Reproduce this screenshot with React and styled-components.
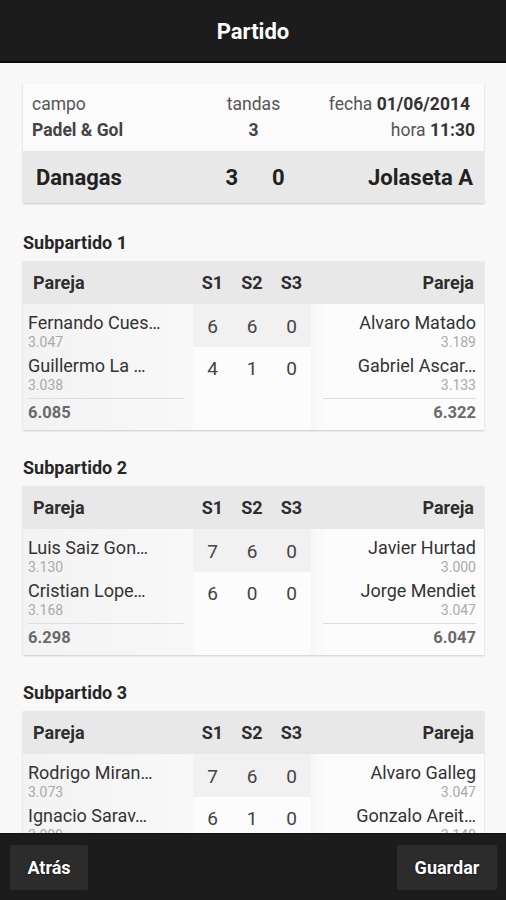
import styled, {createGlobalStyle} from 'styled-components';

const GlobalStyle = createGlobalStyle`
  html, body {
    margin: 0;
    padding: 0;
    background: #1c1c1c;
  }
  * {
    box-sizing: border-box;
  }
`

let Screen = styled.div`
  width: 506px;
  height: 900px;
  display: flex;
  flex-direction: column;
  font-family: Roboto, "Noto Sans", sans-serif;
  background-color: #f8f8f8;
  overflow: hidden;
`

let TopBar = styled.div`
  height: 63px;
  flex-shrink: 0;
  display: flex;
  justify-content: center;
  align-items: center;
  background-color: #1c1c1c;
  border-bottom: 2px solid #0b0b0b;
  color: white;
  font-size: 22px;
  font-weight: bold;
  padding-top: 2px;
`

let Content = styled.div`
  flex: 1;
  overflow: hidden;
  padding: 20px 22px 0 23px;
`

let Card = styled.div`
  background-color: #fbfbfb;
  box-shadow: 0 1px 2px rgba(0, 0, 0, 0.18);
  margin-bottom: ${props => props.$mb || 0}px;
`

let InfoGrid = styled.div`
  display: grid;
  grid-template-columns: 1fr auto 1fr;
  padding: 8px 9px 8px 9px;
  font-size: 17.5px;
  line-height: 26px;
  color: #555;
`

let InfoCell = styled.div`
  text-align: ${props => props.$align || 'left'};
  padding-right: ${props => props.$pr || 0}px;
  white-space: nowrap;
`

let Strong = styled.span`
  font-weight: bold;
  color: ${props => props.$color || '#3a3a3a'};
`

let TeamRow = styled.div`
  height: 52px;
  display: grid;
  grid-template-columns: 1fr auto 1fr;
  align-items: center;
  padding: 0 11px 0 13px;
  background-color: #e8e8e8;
  font-size: 22px;
  font-weight: bold;
  color: #222;
`

let Goals = styled.div`
  display: flex;
  gap: 34px;
  padding-left: 1px;
`

let TeamName = styled.div`
  text-align: ${props => props.$align || 'left'};
`

let SectionTitle = styled.div`
  font-size: 18px;
  font-weight: bold;
  color: #262626;
  line-height: 20px;
  margin-bottom: 8px;
`

let Header = styled.div`
  height: 43px;
  display: grid;
  grid-template-columns: 170px 39px 40px 39px 1fr;
  align-items: center;
  background-color: #e8e8e8;
  font-size: 18px;
  font-weight: bold;
  color: #2e2e2e;
`

let HeadCell = styled.div`
  text-align: ${props => props.$align || 'center'};
  padding: 0 ${props => props.$pr || 0}px 0 ${props => props.$pl || 0}px;
`

let Body = styled.div`
  display: grid;
  grid-template-columns: 170px 118px 1fr;
`

let Side = styled.div`
  padding: 8px ${props => props.$right ? '8px' : '9px'} 7px ${props => props.$right ? '12px' : '5px'};
  text-align: ${props => props.$right ? 'right' : 'left'};
  background: ${props => props.$right
    ? 'linear-gradient(to right, #f6f6f6 0px, #fcfcfc 14px)'
    : 'linear-gradient(to right, #f3f3f3, #f8f8f8)'};
`

let Player = styled.div`
  margin-bottom: 5px;
`

let Name = styled.div`
  font-size: 18px;
  line-height: 22px;
  color: #333;
  white-space: nowrap;
  overflow: hidden;
`

let Rating = styled.div`
  font-size: 14px;
  line-height: 16px;
  color: #aaa;
`

let Total = styled.div`
  border-top: 1px solid #dedede;
  padding-top: 4px;
  font-size: 16.5px;
  line-height: 20px;
  font-weight: bold;
  color: #6a6a6a;
`

let Scores = styled.div`
  display: flex;
  flex-direction: column;
  background-color: #fcfcfc;
`

let ScoreRow = styled.div`
  height: 43px;
  display: grid;
  grid-template-columns: 39px 40px 39px;
  align-items: center;
  background-color: ${props => props.$shade ? '#f1f1f1' : '#fcfcfc'};
  font-size: 19px;
  color: #444;
  padding-top: ${props => props.$shade ? 2 : 0}px;
`

let Score = styled.div`
  text-align: center;
`

let BottomBar = styled.div`
  height: 67px;
  flex-shrink: 0;
  display: flex;
  justify-content: space-between;
  align-items: center;
  padding: 0 9px 0 10px;
  background-color: #1c1c1c;
  border-top: 1px solid #0e0e0e;
`

let Button = styled.div`
  height: 45px;
  width: ${props => props.$w}px;
  display: flex;
  justify-content: center;
  align-items: center;
  background-color: #2c2c2c;
  border-radius: 2px;
  color: white;
  font-size: 18px;
  font-weight: bold;
  text-shadow: 0 0 2px rgba(0, 0, 0, 0.9);
  user-select: none;
`

const subpartidos = [
    {
        left: [{n: 'Fernando Cues…', r: '3.047'}, {n: 'Guillermo La …', r: '3.038'}], lt: '6.085',
        right: [{n: 'Alvaro Matado', r: '3.189'}, {n: 'Gabriel Ascar…', r: '3.133'}], rt: '6.322',
        sets: [[6, 6, 0], [4, 1, 0]],
    },
    {
        left: [{n: 'Luis Saiz Gon…', r: '3.130'}, {n: 'Cristian Lope…', r: '3.168'}], lt: '6.298',
        right: [{n: 'Javier Hurtad', r: '3.000'}, {n: 'Jorge Mendiet', r: '3.047'}], rt: '6.047',
        sets: [[7, 6, 0], [6, 0, 0]],
    },
    {
        left: [{n: 'Rodrigo Miran…', r: '3.073'}, {n: 'Ignacio Sarav…', r: '3.099'}], lt: '6.172',
        right: [{n: 'Alvaro Galleg', r: '3.047'}, {n: 'Gonzalo Areit…', r: '3.140'}], rt: '6.187',
        sets: [[7, 6, 0], [6, 1, 0]],
    },
]

function PlayerSide({players, total, right}) {
    return (
        <Side $right={right}>
            {players.map((p, i) => (
                <Player key={i}>
                    <Name>{p.n}</Name>
                    <Rating>{p.r}</Rating>
                </Player>
            ))}
            <Total>{total}</Total>
        </Side>
    )
}

function Subpartido({num, data}) {
    return (
        <>
            <SectionTitle>Subpartido {num}</SectionTitle>
            <Card $mb={28}>
                <Header>
                    <HeadCell $align="left" $pl={10}>Pareja</HeadCell>
                    <HeadCell>S1</HeadCell>
                    <HeadCell>S2</HeadCell>
                    <HeadCell>S3</HeadCell>
                    <HeadCell $align="right" $pr={10}>Pareja</HeadCell>
                </Header>
                <Body>
                    <PlayerSide players={data.left} total={data.lt}/>
                    <Scores>
                        {data.sets.map((row, i) => (
                            <ScoreRow key={i} $shade={i === 0}>
                                {row.map((s, j) => <Score key={j}>{s}</Score>)}
                            </ScoreRow>
                        ))}
                    </Scores>
                    <PlayerSide players={data.right} total={data.rt} right/>
                </Body>
            </Card>
        </>
    )
}

function App() {
    return (
        <>
            <GlobalStyle/>
            <Screen>
                <TopBar>Partido</TopBar>
                <Content>
                    <Card $mb={30}>
                        <InfoGrid>
                            <InfoCell>campo</InfoCell>
                            <InfoCell $align="center">tandas</InfoCell>
                            <InfoCell $align="right" $pr={5}>fecha <Strong $color="#333">01/06/2014</Strong></InfoCell>
                            <InfoCell><Strong $color="#444">Padel &amp; Gol</Strong></InfoCell>
                            <InfoCell $align="center"><Strong $color="#444">3</Strong></InfoCell>
                            <InfoCell $align="right">hora <Strong $color="#333">11:30</Strong></InfoCell>
                        </InfoGrid>
                        <TeamRow>
                            <TeamName>Danagas</TeamName>
                            <Goals>
                                <span>3</span>
                                <span>0</span>
                            </Goals>
                            <TeamName $align="right">Jolaseta A</TeamName>
                        </TeamRow>
                    </Card>
                    {subpartidos.map((s, i) => (
                        <Subpartido key={i} num={i + 1} data={s}/>
                    ))}
                </Content>
                <BottomBar>
                    <Button $w={78}>Atrás</Button>
                    <Button $w={100}>Guardar</Button>
                </BottomBar>
            </Screen>
        </>
    )
}

export default App;
